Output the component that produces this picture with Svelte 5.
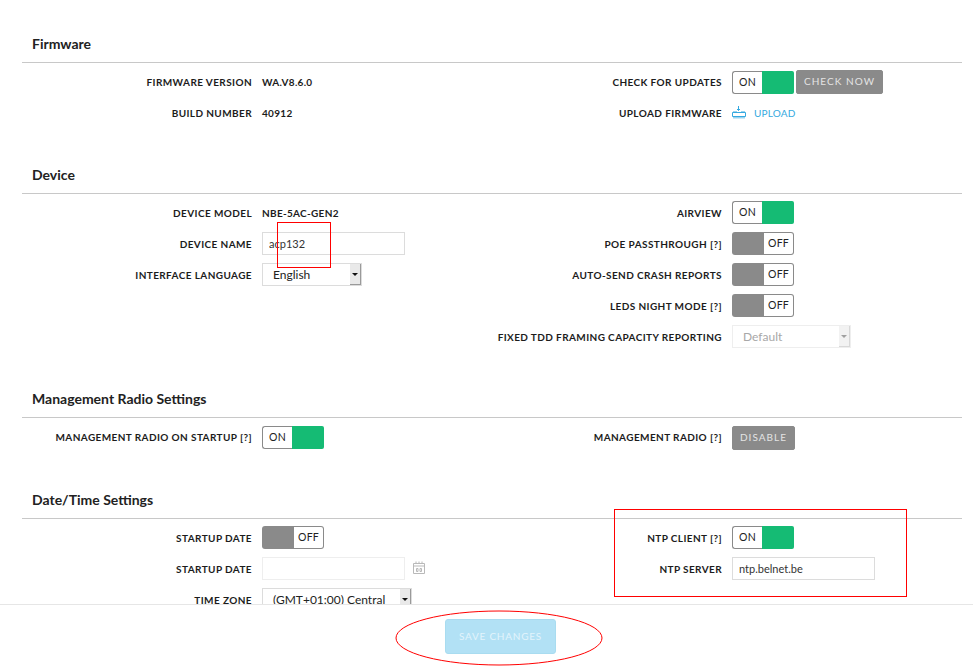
<script>
  const firmwareLeft = [
    { label: "Firmware Version", text: "WA.V8.6.0" },
    { label: "Build Number", text: "40912" },
  ];
  const deviceRight = [
    { label: "airView", on: true },
    { label: "PoE Passthrough [?]", on: false },
    { label: "Auto-send crash reports", on: false },
    { label: "LEDs Night Mode [?]", on: false },
  ];
</script>

<div class="page">
  <main class="content">
    <section class="first">
      <h2>Firmware</h2>
      <div class="columns">
        <div class="col">
          {#each firmwareLeft as row}
            <div class="row">
              <span class="label">{row.label}</span>
              <span class="value">{row.text}</span>
            </div>
          {/each}
        </div>
        <div class="col">
          <div class="row">
            <span class="label">Check for updates</span>
            <span class="toggle on"><span class="cap">ON</span><span class="fill"></span></span>
            <button class="btn check">CHECK NOW</button>
          </div>
          <div class="row">
            <span class="label">Upload Firmware</span>
            <svg class="upload-icon" width="14" height="13" viewBox="0 0 14 13" fill="none" stroke="#35a9e0" stroke-width="1">
              <path d="M6.5 0v4.5M5 3l1.5 1.5L8 3" />
              <path d="M0.5 6.5h13v4h-13z" />
              <path d="M2 5v1.5M4 5v1.5M10 5v1.5M12 5v1.5" />
              <path d="M2 10.5v2M4 10.5v2M6 10.5v2M8 10.5v2M10 10.5v2M12 10.5v2" />
            </svg>
            <a class="upload" href="#upload">UPLOAD</a>
          </div>
        </div>
      </div>
    </section>

    <section class="device">
      <h2>Device</h2>
      <div class="columns">
        <div class="col">
          <div class="row">
            <span class="label">Device Model</span>
            <span class="value">NBE-5AC-Gen2</span>
          </div>
          <div class="row">
            <span class="label">Device Name</span>
            <input class="field" value="acp132" />
          </div>
          <div class="row">
            <span class="label">Interface Language</span>
            <div class="select lang"><span>English</span><i class="arrow"></i></div>
          </div>
        </div>
        <div class="col">
          {#each deviceRight as row}
            <div class="row">
              <span class="label">{row.label}</span>
              {#if row.on}
                <span class="toggle on"><span class="cap">ON</span><span class="fill"></span></span>
              {:else}
                <span class="toggle off"><span class="fill"></span><span class="cap">OFF</span></span>
              {/if}
            </div>
          {/each}
          <div class="row">
            <span class="label">Fixed TDD framing capacity reporting</span>
            <div class="select tdd disabled"><span>Default</span><i class="arrow"></i></div>
          </div>
        </div>
      </div>
    </section>

    <section class="mgmt">
      <h2>Management Radio Settings</h2>
      <div class="columns">
        <div class="col">
          <div class="row">
            <span class="label">Management Radio on startup [?]</span>
            <span class="toggle on"><span class="cap">ON</span><span class="fill"></span></span>
          </div>
        </div>
        <div class="col">
          <div class="row">
            <span class="label">Management Radio [?]</span>
            <button class="btn disable">DISABLE</button>
          </div>
        </div>
      </div>
    </section>

    <section class="date">
      <h2>Date/Time Settings</h2>
      <div class="columns">
        <div class="col">
          <div class="row">
            <span class="label">Startup Date</span>
            <span class="toggle off"><span class="fill"></span><span class="cap">OFF</span></span>
          </div>
          <div class="row">
            <span class="label">Startup Date</span>
            <input class="field faint" value="" />
            <svg class="calendar" width="12" height="13" viewBox="0 0 12 13" fill="none" stroke="#b9b9b9" stroke-width="1">
              <path d="M0.5 2.5h11v10h-11zM0.5 5h11" />
              <path d="M3 0.5v2M6 0.5v2M9 0.5v2" />
              <path d="M3.5 7.5h1.5v3H3.5zM7 7.5h1.5v3H7z" />
            </svg>
          </div>
          <div class="row">
            <span class="label">Time Zone</span>
            <div class="select zone"><span>(GMT+01:00) Central</span><i class="arrow"></i></div>
          </div>
        </div>
        <div class="col">
          <div class="row">
            <span class="label">NTP Client [?]</span>
            <span class="toggle on"><span class="cap">ON</span><span class="fill"></span></span>
          </div>
          <div class="row">
            <span class="label">NTP Server</span>
            <input class="field" value="ntp.belnet.be" />
          </div>
        </div>
      </div>
    </section>
  </main>

  <footer class="actions">
    <button class="save" disabled>SAVE CHANGES</button>
  </footer>

  <!-- red markup drawn over the screenshot -->
  <div class="mark name"></div>
  <div class="mark ntp"></div>
  <svg class="mark-ellipse" width="210" height="58" viewBox="0 0 210 58">
    <ellipse cx="105" cy="29" rx="103" ry="27" fill="none" stroke="#f00" stroke-width="1" />
  </svg>
</div>

<style>
  :global(body) {
    background: #fff;
    font-family: Lato, "Open Sans", sans-serif;
    color: #1c1c1c;
  }
  .page {
    position: relative;
    display: flex;
    flex-direction: column;
    height: 668px;
    overflow: hidden;
  }
  .content {
    flex: 1;
    min-height: 0;
    overflow: hidden;
    padding: 0 11px 0 22px;
  }
  section.first {
    padding: 30px 0 32px;
  }
  section.device {
    padding-bottom: 33px;
  }
  section.mgmt {
    padding-bottom: 33px;
  }
  h2 {
    margin: 0;
    height: 32px;
    padding-left: 10px;
    line-height: 28px;
    font-size: 14px;
    font-weight: 700;
    color: #222;
    border-bottom: 1px solid #c8c8c8;
  }
  .columns {
    display: grid;
    grid-template-columns: 470px 470px;
    padding-top: 3px;
  }
  .first .columns,
  .mgmt .columns {
    padding-top: 4px;
  }
  .row {
    display: flex;
    align-items: center;
    height: 31px;
  }
  .label {
    flex: none;
    width: 230px;
    margin-right: 10px;
    text-align: right;
    white-space: nowrap;
    text-transform: uppercase;
    font-size: 10px;
    font-weight: 700;
    letter-spacing: 0.4px;
    color: #1c1c1c;
  }
  .value {
    text-transform: uppercase;
    font-size: 10px;
    font-weight: 700;
    letter-spacing: 0.3px;
    color: #1c1c1c;
  }
  .first .label,
  .first .value,
  .mgmt .label {
    padding-bottom: 2px;
  }
  .toggle {
    display: flex;
    width: 62px;
    height: 23px;
    font-size: 10.5px;
    color: #222;
  }
  .toggle .cap {
    display: flex;
    align-items: center;
    justify-content: center;
    width: 30px;
    box-sizing: border-box;
    background: #fff;
    padding-bottom: 1px;
    border: 1px solid #8a8a8a;
    letter-spacing: 0.2px;
  }
  .toggle .fill {
    flex: 1;
  }
  .toggle.on .cap {
    border-right: 0;
    border-radius: 3px 0 0 3px;
  }
  .toggle.on .fill {
    background: #15bb74;
    border-radius: 0 2px 2px 0;
  }
  .toggle.off .cap {
    border-left: 0;
    border-radius: 0 3px 3px 0;
  }
  .toggle.off .fill {
    background: #8a8a8a;
    border-radius: 3px 0 0 3px;
  }
  .btn {
    height: 24px;
    box-sizing: border-box;
    border: 1px solid #8a8a8a;
    border-radius: 2px;
    background: #8a8a8a;
    color: #e4e4e4;
    font-family: inherit;
    font-size: 10px;
    letter-spacing: 1.05px;
    padding: 0 0 2px;
  }
  .check {
    width: 87px;
    margin: -1px 0 0 2px;
  }
  .disable {
    width: 63px;
  }
  .upload-icon {
    margin: 0 8px 0 0;
    position: relative;
    top: -1px;
  }
  .upload {
    color: #35a9e0;
    font-size: 10px;
    letter-spacing: 0.2px;
    text-decoration: none;
    margin-top: -2px;
  }
  .field {
    width: 143px;
    height: 23px;
    box-sizing: border-box;
    border: 1px solid #dcdcdc;
    padding: 0 6px;
    font-family: inherit;
    font-size: 11px;
    color: #333;
    outline: none;
    background: #fff;
  }
  .field.faint {
    border-color: #eee;
  }
  .calendar {
    margin-left: 8px;
    margin-top: -2px;
  }
  .select {
    position: relative;
    height: 23px;
    box-sizing: border-box;
    border: 1px solid #dcdcdc;
    padding-left: 10px;
    display: flex;
    align-items: center;
    font-size: 12px;
    color: #222;
    background: #fff;
    white-space: nowrap;
  }
  .select .arrow {
    position: absolute;
    top: 0;
    right: 0;
    bottom: 0;
    width: 10px;
    background: #e9e9e9;
    border-right: 1px solid #9a9a9a;
    border-bottom: 1px solid #9a9a9a;
  }
  .select .arrow::after {
    content: "";
    position: absolute;
    left: 2px;
    top: 9px;
    border: 3px solid transparent;
    border-top: 3px solid #111;
    border-bottom: 0;
  }
  .lang {
    width: 100px;
  }
  .zone {
    width: 150px;
  }
  .tdd {
    width: 119px;
  }
  .select.disabled {
    border-color: #eee;
    color: #a8a8a8;
  }
  .select.disabled .arrow {
    background: #f2f2f2;
    border-color: #d8d8d8;
  }
  .select.disabled .arrow::after {
    border-top-color: #a0a0a0;
  }
  .actions {
    flex: none;
    height: 64px;
    box-sizing: border-box;
    border-top: 1px solid #e6e6e6;
    background: #fff;
    display: flex;
    justify-content: center;
    padding: 14px 0 0 28px;
  }
  .save {
    width: 111px;
    height: 35px;
    border: 1px solid #a9dcf0;
    border-radius: 3px;
    background: #b2e1f5;
    color: #e2f4fc;
    font-family: inherit;
    font-size: 10px;
    letter-spacing: 0.75px;
    padding: 0 0 2px;
  }
  .mark {
    position: absolute;
    box-sizing: border-box;
    border: 1px solid #f00;
  }
  .mark.name {
    left: 277px;
    top: 222px;
    width: 54px;
    height: 46px;
  }
  .mark.ntp {
    left: 614px;
    top: 509px;
    width: 293px;
    height: 88px;
  }
  .mark-ellipse {
    position: absolute;
    left: 394px;
    top: 609px;
  }
</style>
